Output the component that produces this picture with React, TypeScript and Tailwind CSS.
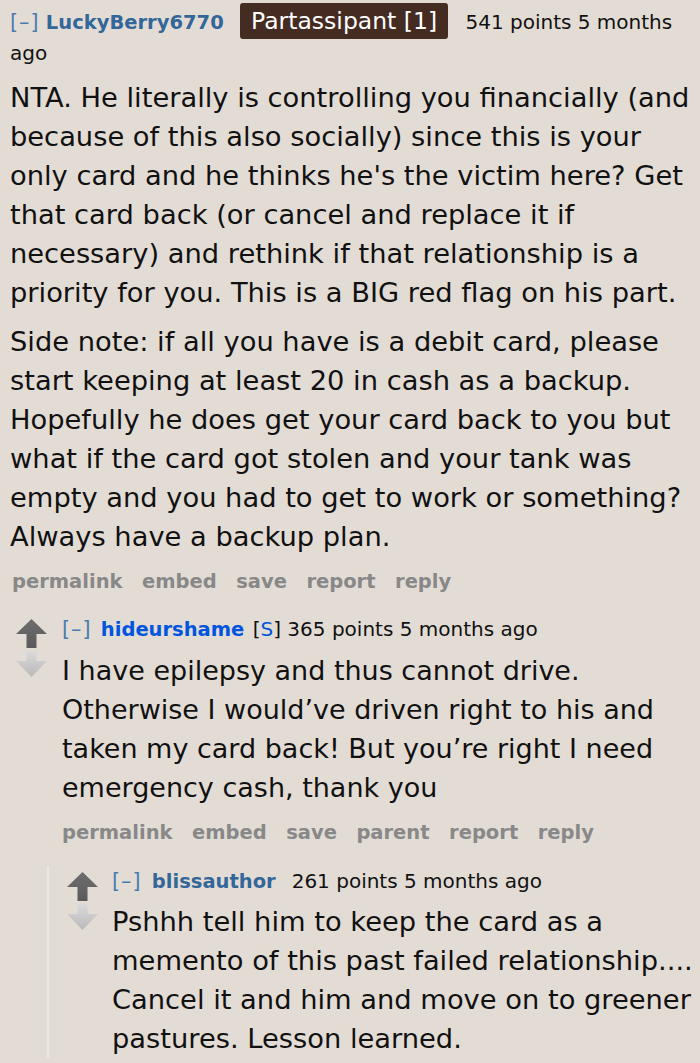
import React from "react";

const Up = () => (
  <svg width="31" height="29" viewBox="0 0 31 29" className="block">
    <defs>
      <linearGradient id="ug" x1="0" y1="0" x2="0" y2="1">
        <stop offset="0" stopColor="#6e6e6e" />
        <stop offset="1" stopColor="#5a5a5a" />
      </linearGradient>
    </defs>
    <path d="M15.5 0 L31 15 L20.5 15 L20.5 29 L10.5 29 L10.5 15 L0 15 Z" fill="url(#ug)" />
  </svg>
);

const Down = () => (
  <svg width="31" height="26" viewBox="0 0 31 26" className="block">
    <defs>
      <linearGradient id="dg" x1="0" y1="0" x2="0" y2="1">
        <stop offset="0" stopColor="#dadada" />
        <stop offset="1" stopColor="#b9b9b9" />
      </linearGradient>
    </defs>
    <path d="M10.5 0 L20.5 0 L20.5 10 L31 10 L15.5 26 L0 10 L10.5 10 Z" fill="url(#dg)" />
  </svg>
);

const Buttons = ({ items }: { items: string[] }) => (
  <div className="flex gap-[19.5px] text-[19.5px] leading-[26px] font-bold text-[#888]">
    {items.map((i) => (
      <span key={i}>{i}</span>
    ))}
  </div>
);

const Lines = ({ lines }: { lines: string[] }) => (
  <p className="whitespace-nowrap">
    {lines.map((l, i) => (
      <React.Fragment key={i}>
        {l}
        {i < lines.length - 1 && <br />}
      </React.Fragment>
    ))}
  </p>
);

const Collapse = () => (
  <span className="text-[#4a7bb0] text-[20.7px] tracking-[1px]">[–]</span>
);

export default function App() {
  return (
    <div
      className="w-[700px] h-[1063px] overflow-hidden bg-[#e3dcd5] text-[#111]"
      style={{ fontFamily: '"DejaVu Sans", Verdana, sans-serif' }}
    >
      {/* top-level comment */}
      <div className="pl-[10px] pt-[6px]">
        <div className="text-[20px] leading-[31px] w-[690px]">
          <Collapse />{" "}
          <span className="font-bold text-[#336699] text-[19.5px]">LuckyBerry6770</span>{" "}
          <span className="bg-[#452c23] text-white text-[23.5px] px-[11px] py-[4px] rounded-[3px] ml-[10px] mr-[11px]">
            Partassipant [1]
          </span>{" "}
          <span>541 points 5 months</span>
          <br />
          <span>ago</span>
        </div>
        <div className="text-[27.3px] leading-[39px] mt-[8.5px]">
          <Lines
            lines={[
              "NTA. He literally is controlling you financially (and",
              "because of this also socially) since this is your",
              "only card and he thinks he's the victim here? Get",
              "that card back (or cancel and replace it if",
              "necessary) and rethink if that relationship is a",
              "priority for you. This is a BIG red flag on his part.",
            ]}
          />
          <div className="mt-[10px]">
            <Lines
              lines={[
                "Side note: if all you have is a debit card, please",
                "start keeping at least 20 in cash as a backup.",
                "Hopefully he does get your card back to you but",
                "what if the card got stolen and your tank was",
                "empty and you had to get to work or something?",
                "Always have a backup plan.",
              ]}
            />
          </div>
        </div>
        <div className="mt-[13.5px] pl-[2px]">
          <Buttons items={["permalink", "embed", "save", "report", "reply"]} />
        </div>
      </div>

      {/* child comment */}
      <div className="flex mt-[18.5px] pl-[16px]">
        <div className="w-[31px] mr-[15px] pt-[5.5px] flex flex-col gap-[3px] shrink-0">
          <Up />
          <Down />
        </div>
        <div className="w-[640px] shrink-0">
          <div className="text-[20px] leading-[31px]">
            <Collapse />{" "}
            <span className="font-bold text-[#0055df] text-[19.5px] ml-[3px]">hideurshame</span>{" "}
            <span className="ml-[2px]">
              [<span className="text-[#0055df]">S</span>]
            </span>{" "}
            <span>365 points 5 months ago</span>
          </div>
          <div className="text-[27px] leading-[39px] mt-[6px]">
            <Lines
              lines={[
                "I have epilepsy and thus cannot drive.",
                "Otherwise I would’ve driven right to his and",
                "taken my card back! But you’re right I need",
                "emergency cash, thank you",
              ]}
            />
          </div>
          <div className="mt-[13.5px]">
            <Buttons items={["permalink", "embed", "save", "parent", "report", "reply"]} />
          </div>
        </div>
      </div>

      {/* grandchild comment */}
      <div className="flex mt-[20px] ml-[47px] border-l-2 border-[#ebe7e3] pl-[18px]">
        <div className="w-[31px] mr-[14px] pt-[5.5px] flex flex-col gap-[3px] shrink-0">
          <Up />
          <Down />
        </div>
        <div className="w-[600px] shrink-0">
          <div className="text-[20px] leading-[31px]">
            <Collapse />{" "}
            <span className="font-bold text-[#336699] text-[19.5px] ml-[4px]">blissauthor</span>
            <span className="ml-[16px]">261 points 5 months ago</span>
          </div>
          <div className="text-[27.3px] leading-[39px] mt-[4.5px]">
            <Lines
              lines={[
                "Pshhh tell him to keep the card as a",
                "memento of this past failed relationship....",
                "Cancel it and him and move on to greener",
                "pastures. Lesson learned.",
              ]}
            />
          </div>
        </div>
      </div>
    </div>
  );
}
